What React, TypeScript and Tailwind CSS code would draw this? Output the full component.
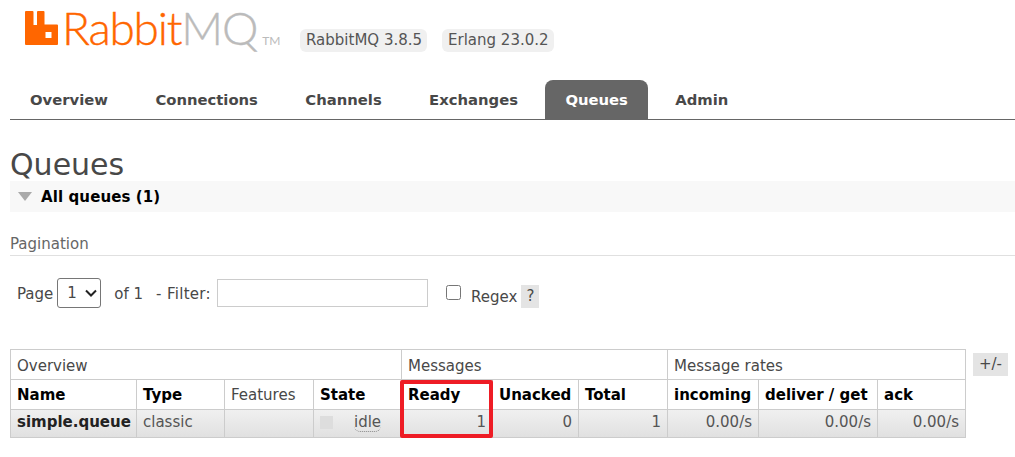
const sans = "font-['DejaVu_Sans',Verdana,sans-serif]";

const tabs = ["Overview", "Connections", "Channels", "Exchanges", "Queues", "Admin"];

const th = "border border-[#ccc] px-[6px] pt-[2px] text-left h-[30px] font-bold text-black";
const td = "border border-[#ccc] px-[6px] pb-[2px] text-right text-[#555] h-[28px]";
const thGroup = "border border-[#ccc] px-[6px] pt-[3px] text-left h-[30px] font-normal text-[#484848]";
const thPlain = "border border-[#ccc] px-[6px] pt-[2px] text-left h-[30px] font-normal text-[#484848]";

export default function App() {
  return (
    <div className={`${sans} bg-white w-[1015px] h-[457px] overflow-hidden text-[15px] text-[#484848]`}>
      {/* header */}
      <div className="flex items-start h-[80px] pl-[25px]">
        <svg width="33" height="34" viewBox="0 0 33 34" className="mt-[11px] shrink-0">
          <path
            fillRule="evenodd"
            fill="#ff6600"
            d="M1 0H7.500Q8.500 0 8.500 1V14H12V1Q12 0 13 0H18.500Q19.500 0 19.500 1V13.500H32Q33 13.500 33 14.500V33Q33 34 32 34H1Q0 34 0 33V1Q0 0 1 0ZM20.500 21V27H26.500V21Z"
          />
        </svg>
        <div className="flex items-baseline w-[242px] ml-[4px] mt-[8px] font-['Lato',sans-serif] font-light text-[46px] leading-[40px] tracking-[-1.2px] [-webkit-text-stroke:0.4px_currentColor]">
          <span className="text-[#ff6600]">Rabbit</span>
          <span className="text-[#bbb]">MQ</span>
          <span className="text-[#bbb] text-[12px] leading-[14px] ml-[5px] tracking-normal font-normal [-webkit-text-stroke:0]">TM</span>
        </div>
        <div className="flex gap-[15px] mt-[29px] -ml-[4px]">
          <span className="bg-[#f0f0f0] rounded-[6px] h-[23px] pl-[6px] pr-[5px] leading-[23px] text-[#555]">RabbitMQ 3.8.5</span>
          <span className="bg-[#f0f0f0] rounded-[6px] h-[23px] pl-[6px] pr-[5px] leading-[23px] text-[#555]">Erlang 23.0.2</span>
        </div>
      </div>

      {/* tabs */}
      <div className="flex ml-[10px] h-[39px] border-b border-[#666] w-[1005px] box-content text-[14.8px]">
        {tabs.map((t) => (
          <div
            key={t}
            className={
              t === "Queues"
                ? "bg-[#666] text-white font-bold rounded-t-[8px] px-[20px] mr-[7.4px] leading-[39px]"
                : "font-bold px-[20px] mr-[7.4px] leading-[39px]"
            }
          >
            {t}
          </div>
        ))}
      </div>

      <h1 className="mx-[10px] mt-[28px] text-[30px] leading-[33px] text-[#484848]">Queues</h1>

      <div className="ml-[10px] h-[31px] bg-[#f8f8f8] flex items-center pl-[8px]">
        <svg width="14" height="9" viewBox="0 0 14 9" className="shrink-0">
          <path d="M0 0H14L7 9Z" fill="#aaa" />
        </svg>
        <span className="ml-[9px] pt-[2px] font-bold text-black tracking-[0.1px]">All queues (1)</span>
      </div>

      <div className="ml-[10px] mt-[23px] h-[20px] border-b border-[#e0e0e0] text-[#666] leading-[18px] box-content">
        Pagination
      </div>

      <div className="flex items-center h-[30px] ml-[17px] mt-[22px]">
        <span className="mt-[2px]">Page</span>
        <div className="relative ml-[4px] w-[44px] h-[30px]">
          <select className="appearance-none w-full h-full border border-[#767676] rounded-[3px] bg-white pl-[9px]">
            <option>1</option>
          </select>
          <svg width="12" height="8" viewBox="0 0 12 8" className="absolute right-[4px] top-[11px] pointer-events-none">
            <path d="M1 1.500L6 6.500L11 1.500" fill="none" stroke="#222" strokeWidth="2" />
          </svg>
        </div>
        <span className="ml-[13px] mt-[2px]">of 1</span>
        <span className="ml-[13px] mt-[2px] w-[55px] whitespace-nowrap tracking-[0.3px]">- Filter:</span>
        <input type="text" className="ml-[6px] w-[211px] h-[28px] border border-[#ccc]" />
        <input type="checkbox" className="ml-[18px] w-[15px] h-[15px] mb-[1px]" />
        <span className="ml-[10px] mt-[8px]">Regex</span>
        <span className="ml-[4px] mt-[7px] bg-[#e4e4e4] w-[18px] h-[23px] leading-[23px] text-center">?</span>
      </div>

      {/* table */}
      <div className="flex items-start ml-[10px] mt-[41px]">
        <div className="relative w-[956px] shrink-0">
          <table className="border-collapse w-[955px] table-fixed">
            <colgroup>
              <col className="w-[126px]" />
              <col className="w-[88px]" />
              <col className="w-[89px]" />
              <col className="w-[88px]" />
              <col className="w-[91px]" />
              <col className="w-[86px]" />
              <col className="w-[89px]" />
              <col className="w-[91px]" />
              <col className="w-[119px]" />
              <col className="w-[88px]" />
            </colgroup>
            <thead>
              <tr>
                <th colSpan={4} className={thGroup}>Overview</th>
                <th colSpan={3} className={thGroup}>Messages</th>
                <th colSpan={3} className={thGroup}>Message rates</th>
              </tr>
              <tr>
                <th className={th}>Name</th>
                <th className={th}>Type</th>
                <th className={thPlain}>Features</th>
                <th className={th}>State</th>
                <th className={th}>Ready</th>
                <th className={th}>Unacked</th>
                <th className={th}>Total</th>
                <th className={th}>incoming</th>
                <th className={th}>deliver / get</th>
                <th className={th}>ack</th>
              </tr>
            </thead>
            <tbody className="bg-gradient-to-b from-[#f0f0f0] to-[#e0e0e0]">
              <tr>
                <td className="border border-[#ccc] px-[6px] pb-[2px] text-left font-bold text-[#222] h-[28px]">simple.queue</td>
                <td className="border border-[#ccc] px-[6px] pb-[2px] text-left text-[#555] h-[28px]">classic</td>
                <td className={td}></td>
                <td className={td}>
                  <div className="flex items-center">
                    <span className="w-[13px] h-[13px] bg-[#ddd]" />
                    <span className="ml-[21px] border-b border-dotted border-[#888] rounded-b-[6px] leading-[17px]">idle</span>
                  </div>
                </td>
                <td className={td}>1</td>
                <td className={td}>0</td>
                <td className={td}>1</td>
                <td className={td}>0.00/s</td>
                <td className={td}>0.00/s</td>
                <td className={td}>0.00/s</td>
              </tr>
            </tbody>
          </table>
          {/* highlight drawn on the screenshot */}
          <div className="absolute left-[390px] top-[31px] w-[93px] h-[58px] border-[4px] border-[#ee1c25] rounded-[2px]" />
        </div>
        <span className="ml-[7px] mt-[4px] bg-[#e4e4e4] w-[35px] h-[23px] leading-[23px] text-center text-[#484848]">+/-</span>
      </div>
    </div>
  );
}
